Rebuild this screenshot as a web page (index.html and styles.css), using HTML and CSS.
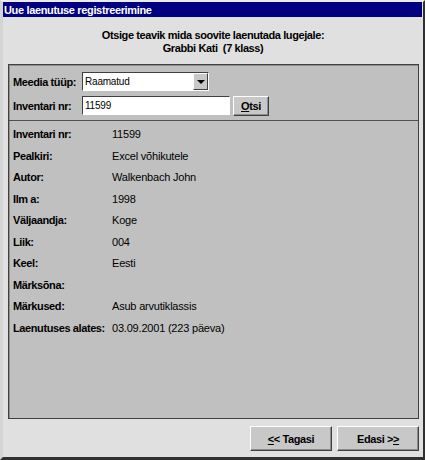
FILE: index.html
```html
<!DOCTYPE html>
<html lang="et">
<head>
<meta charset="utf-8">
<title>Uue laenutuse registreerimine</title>
<link rel="stylesheet" href="styles.css">
</head>
<body>
<div class="window">
  <div class="titlebar">Uue laenutuse registreerimine</div>
  <div class="heading">
    <div>Otsige teavik mida soovite laenutada lugejale:</div>
    <div class="pre">Grabbi Kati  (7 klass)</div>
  </div>
  <div class="panel">
    <div class="search">
      <div class="srow">
        <span class="slabel">Meedia tüüp:</span>
        <div class="select"><span class="stext">Raamatud</span><span class="arrow"><span class="tri"></span></span></div>
      </div>
      <div class="srow">
        <span class="slabel">Inventari nr:</span>
        <div class="input">11599</div>
        <div class="btn small"><u>O</u>tsi</div>
      </div>
    </div>
    <div class="details">
      <div class="drow"><span class="dl">Inventari nr:</span><span class="dv">11599</span></div>
      <div class="drow"><span class="dl">Pealkiri:</span><span class="dv">Excel võhikutele</span></div>
      <div class="drow"><span class="dl">Autor:</span><span class="dv">Walkenbach John</span></div>
      <div class="drow"><span class="dl">Ilm a:</span><span class="dv">1998</span></div>
      <div class="drow"><span class="dl">Väljaandja:</span><span class="dv">Koge</span></div>
      <div class="drow"><span class="dl">Liik:</span><span class="dv">004</span></div>
      <div class="drow"><span class="dl">Keel:</span><span class="dv">Eesti</span></div>
      <div class="drow"><span class="dl">Märksõna:</span><span class="dv"></span></div>
      <div class="drow"><span class="dl">Märkused:</span><span class="dv">Asub arvutiklassis</span></div>
      <div class="drow"><span class="dl">Laenutuses alates:</span><span class="dv">03.09.2001 (223 päeva)</span></div>
    </div>
  </div>
  <div class="footer">
    <div class="btn big"><u>&lt;</u>&lt; Tagasi</div>
    <div class="btn big">Edasi &gt;<u>&gt;</u></div>
  </div>
</div>
</body>
</html>
```
FILE: styles.css
```css
html, body {
  margin: 0;
  padding: 0;
  background: #e0e0e0;
}
body {
  font-family: "Liberation Sans", Arial, sans-serif;
  font-size: 11px;
  color: #000;
}
.window {
  width: 425px;
  height: 460px;
  box-sizing: border-box;
  border-top: 2px solid #ececec;
  border-left: 3px solid #d4d4d4;
  border-right: 2px solid #303030;
  border-bottom: 3px solid #303030;
  background: #e0e0e0;
  display: flex;
  flex-direction: column;
}
.titlebar {
  height: 15px;
  line-height: 16px;
  background: #000080;
  color: #fff;
  font-weight: bold;
  letter-spacing: -0.35px;
  padding-left: 1px;
  margin-right: 1px;
  white-space: nowrap;
  overflow: hidden;
}
.heading {
  padding-top: 12px;
  margin-bottom: 9px;
  line-height: 13px;
  text-align: center;
  font-weight: bold;
  letter-spacing: -0.4px;
}
.pre { white-space: pre; }
.panel {
  margin: 0 4px 0 5px;
  height: 355px;
  box-sizing: border-box;
  border: 1px solid #404040;
  box-shadow: inset 1px 1px 0 #909090;
  background: #c0c0c0;
  display: flex;
  flex-direction: column;
}
.search {
  padding: 7px 0 5px 4px;
  display: flex;
  flex-direction: column;
  gap: 5px;
  border-bottom: 1px solid #505050;
}
.srow {
  display: flex;
  align-items: center;
  height: 19px;
}
.slabel {
  width: 69px;
  font-weight: bold;
  letter-spacing: -0.4px;
  white-space: nowrap;
}
.select {
  width: 127px;
  height: 19px;
  box-sizing: border-box;
  border-top: 1px solid #404040;
  border-left: 1px solid #404040;
  border-right: 1px solid #ffffff;
  border-bottom: 1px solid #ffffff;
  background: #fff;
  display: flex;
  align-items: center;
  justify-content: space-between;
  font-size: 10px;
}
.stext {
  padding-left: 2px;
  letter-spacing: -0.2px;
}
.arrow {
  width: 15px;
  height: 17px;
  box-sizing: border-box;
  background: #c8c8c8;
  border-top: 1px solid #fff;
  border-left: 1px solid #fff;
  border-right: 1px solid #404040;
  border-bottom: 1px solid #404040;
  display: flex;
  align-items: center;
  justify-content: center;
}
.tri {
  width: 0;
  height: 0;
  border-left: 4px solid transparent;
  border-right: 4px solid transparent;
  border-top: 4px solid #000;
  margin-top: 1px;
}
.input {
  width: 148px;
  height: 19px;
  box-sizing: border-box;
  border-top: 1px solid #404040;
  border-left: 1px solid #404040;
  border-right: 1px solid #ffffff;
  border-bottom: 1px solid #ffffff;
  background: #fff;
  padding-left: 2px;
  line-height: 17px;
  font-size: 10px;
  letter-spacing: -0.2px;
}
.btn {
  box-sizing: border-box;
  background: #c8c8c8;
  border-top: 1px solid #ffffff;
  border-left: 1px solid #ffffff;
  border-right: 1px solid #404040;
  border-bottom: 1px solid #404040;
  box-shadow: inset -1px -1px 0 #8c8c8c;
  font-weight: bold;
  letter-spacing: -0.4px;
  display: flex;
  align-items: center;
  justify-content: center;
  white-space: nowrap;
}
.btn.small {
  width: 36px;
  height: 20px;
  margin-left: 3px;
}
.details {
  padding: 3px 0 0 4px;
}
.drow {
  display: flex;
  height: 21.5px;
  line-height: 21.5px;
}
.dl {
  width: 99px;
  font-weight: bold;
  letter-spacing: -0.4px;
  white-space: nowrap;
}
.dv {
  letter-spacing: -0.2px;
  white-space: nowrap;
}
.footer {
  display: flex;
  justify-content: flex-end;
  gap: 5px;
  padding: 7px 4px 0 0;
}
.btn.big {
  width: 82px;
  height: 25px;
}
```
